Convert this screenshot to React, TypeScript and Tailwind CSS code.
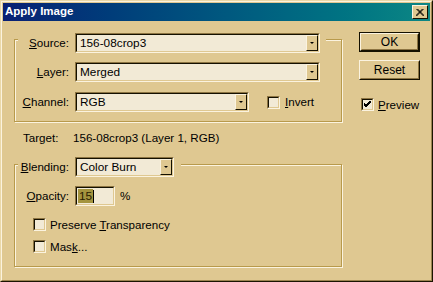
import React from "react";

const FACE = "bg-[#dfc891]";

function U({ children }: { children: React.ReactNode }) {
  return <span className="underline underline-offset-[1px]">{children}</span>;
}

function Arrow() {
  return (
    <div className="w-0 h-0 border-l-[2px] border-r-[2px] border-t-[2px] border-l-transparent border-r-transparent border-t-black" />
  );
}

function Combo({ className, text }: { className: string; text: string }) {
  return (
    <div
      className={`flex h-[20px] border border-t-[#8c7442] border-l-[#8c7442] border-b-[#fbf3df] border-r-[#fbf3df] ${className}`}
    >
      <div className="flex flex-1 border border-t-[#141000] border-l-[#141000] border-b-[#dfc891] border-r-[#dfc891] bg-[#f2ead6]">
        <span className="flex-1 pl-[3px] leading-[16px] text-[11.8px]">{text}</span>
        <div className="w-[12px] h-full bg-[#dfc891] border border-t-[#fbf3df] border-l-[#fbf3df] border-b-[#141000] border-r-[#141000] flex items-center justify-center">
          <Arrow />
        </div>
      </div>
    </div>
  );
}

function Check({ checked }: { checked?: boolean }) {
  return (
    <div className="w-[13px] h-[13px] border border-t-[#8c7442] border-l-[#8c7442] border-b-[#fbf3df] border-r-[#fbf3df] shrink-0">
      <div className="w-full h-full border border-t-[#141000] border-l-[#141000] border-b-[#dfc891] border-r-[#dfc891] bg-[#f2ead6] flex items-center justify-center">
        {checked && (
          <svg width="7" height="7" viewBox="0 0 7 7">
            <path d="M0 2 L2 4 L7 -1 M0 3 L2 5 L7 0 M0 4 L2 6 L7 1" stroke="black" strokeWidth="1" fill="none" shapeRendering="crispEdges" />
          </svg>
        )}
      </div>
    </div>
  );
}

function Button({ label, isDefault }: { label: string; isDefault?: boolean }) {
  const inner = (
    <div className="flex-1 border border-t-[#fbf3df] border-l-[#fbf3df] border-b-[#141000] border-r-[#141000]">
      <div className="w-full h-full border border-t-transparent border-l-transparent border-b-[#8c7442] border-r-[#8c7442] flex items-center justify-center text-[12px]">
        {label}
      </div>
    </div>
  );
  return (
    <div className={`w-[61px] h-[20px] flex ${isDefault ? "border border-[#141000]" : ""}`}>{inner}</div>
  );
}

const groupBox =
  "border border-[#b89a4c] shadow-[1px_1px_0_#fbf3df,inset_1px_1px_0_#fbf3df] w-[328px]";

export default function App() {
  return (
    <div
      className={`w-[433px] h-[282px] ${FACE} border border-t-[#ead8a8] border-l-[#ead8a8] border-b-[#1a1400] border-r-[#1a1400] font-['Liberation_Sans',Arial,sans-serif] text-[11.6px] text-black`}
    >
      <div className="w-full h-full border border-t-[#fbf3df] border-l-[#fbf3df] border-b-[#9c8450] border-r-[#9c8450] p-[1px] flex flex-col">
        {/* Title bar */}
        <div className="h-[18px] flex items-center bg-gradient-to-r from-[#0a1f74] to-[#0d8784] pl-[2px] pr-[2px]">
          <span className="text-white font-bold text-[11.5px] flex-1">Apply Image</span>
          <div className="w-[16px] h-[14px] bg-[#dfc891] border border-t-[#fbf3df] border-l-[#fbf3df] border-b-[#141000] border-r-[#141000] flex items-center justify-center">
            <svg width="8" height="7" viewBox="0 0 8 7">
              <path d="M0.5 0 L7.5 7 M1.5 0 L8.5 7 M7.5 0 L0.5 7 M6.5 0 L-0.5 7" stroke="black" strokeWidth="1" />
            </svg>
          </div>
        </div>

        {/* Body */}
        <div className="flex items-start">
          {/* Left column */}
          <div className="ml-[11px] mt-[18px] flex flex-col">
            <div className={`${groupBox} h-[83px] flex flex-col`}>
              <div className={`-mt-[7px] ml-[3px] pr-[6px] ${FACE} w-fit flex items-center h-[20px]`}>
                <span className="w-[51px] text-right">
                  <U>S</U>ource:
                </span>
                <Combo className="ml-[6px] w-[245px]" text="156-08crop3" />
              </div>
              <div className="mt-[9px] ml-[3px] flex items-center h-[20px]">
                <span className="w-[51px] text-right">
                  <U>L</U>ayer:
                </span>
                <Combo className="ml-[6px] w-[245px]" text="Merged" />
              </div>
              <div className="mt-[10px] ml-[3px] flex items-center h-[20px]">
                <span className="w-[51px] text-right">
                  <U>C</U>hannel:
                </span>
                <Combo className="ml-[6px] w-[174px]" text="RGB" />
                <div className="ml-[18px]">
                  <Check />
                </div>
                <span className="ml-[5px]">
                  <U>I</U>nvert
                </span>
              </div>
            </div>

            <div className="mt-[9px] h-[14px] flex items-center pl-[9px]">
              <span className="w-[50px]">Target:</span>
              <span>156-08crop3 (Layer 1, RGB)</span>
            </div>

            <div className={`${groupBox} mt-[19px] h-[103px] flex flex-col`}>
              <div className={`-mt-[8px] ml-[3px] pr-[7px] ${FACE} w-fit flex items-center h-[20px]`}>
                <span className="w-[51px] text-right">
                  <U>B</U>lending:
                </span>
                <Combo className="ml-[6px] w-[99px]" text="Color Burn" />
              </div>
              <div className="mt-[9px] ml-[3px] flex items-center h-[20px]">
                <span className="w-[51px] text-right">
                  <U>O</U>pacity:
                </span>
                <div className="ml-[6px] w-[40px] h-[20px] border border-t-[#8c7442] border-l-[#8c7442] border-b-[#fbf3df] border-r-[#fbf3df]">
                  <div className="w-full h-full border border-t-[#141000] border-l-[#141000] border-b-[#dfc891] border-r-[#dfc891] bg-[#f2ead6] flex items-center pl-[1px]">
                    <span className="bg-[#a4943e] text-[#2a2000] leading-[14px] px-[1px] text-[11.8px]">15</span>
                    <span className="w-[1px] h-[13px] bg-black" />
                  </div>
                </div>
                <span className="ml-[5px]">%</span>
              </div>
              <div className="mt-[12px] ml-[18px] flex items-center h-[13px]">
                <Check />
                <span className="ml-[4px]">
                  Preserve <U>T</U>ransparency
                </span>
              </div>
              <div className="mt-[9px] ml-[18px] flex items-center h-[13px]">
                <Check />
                <span className="ml-[4px]">
                  Mas<U>k</U>...
                </span>
              </div>
            </div>
          </div>

          {/* Right column */}
          <div className="ml-[17px] mt-[11px] flex flex-col">
            <Button label="OK" isDefault />
            <div className="mt-[8px]">
              <Button label="Reset" />
            </div>
            <div className="mt-[18px] ml-[2px] flex items-center h-[13px]">
              <Check checked />
              <span className="ml-[4px]">
                <U>P</U>review
              </span>
            </div>
          </div>
        </div>
      </div>
    </div>
  );
}
